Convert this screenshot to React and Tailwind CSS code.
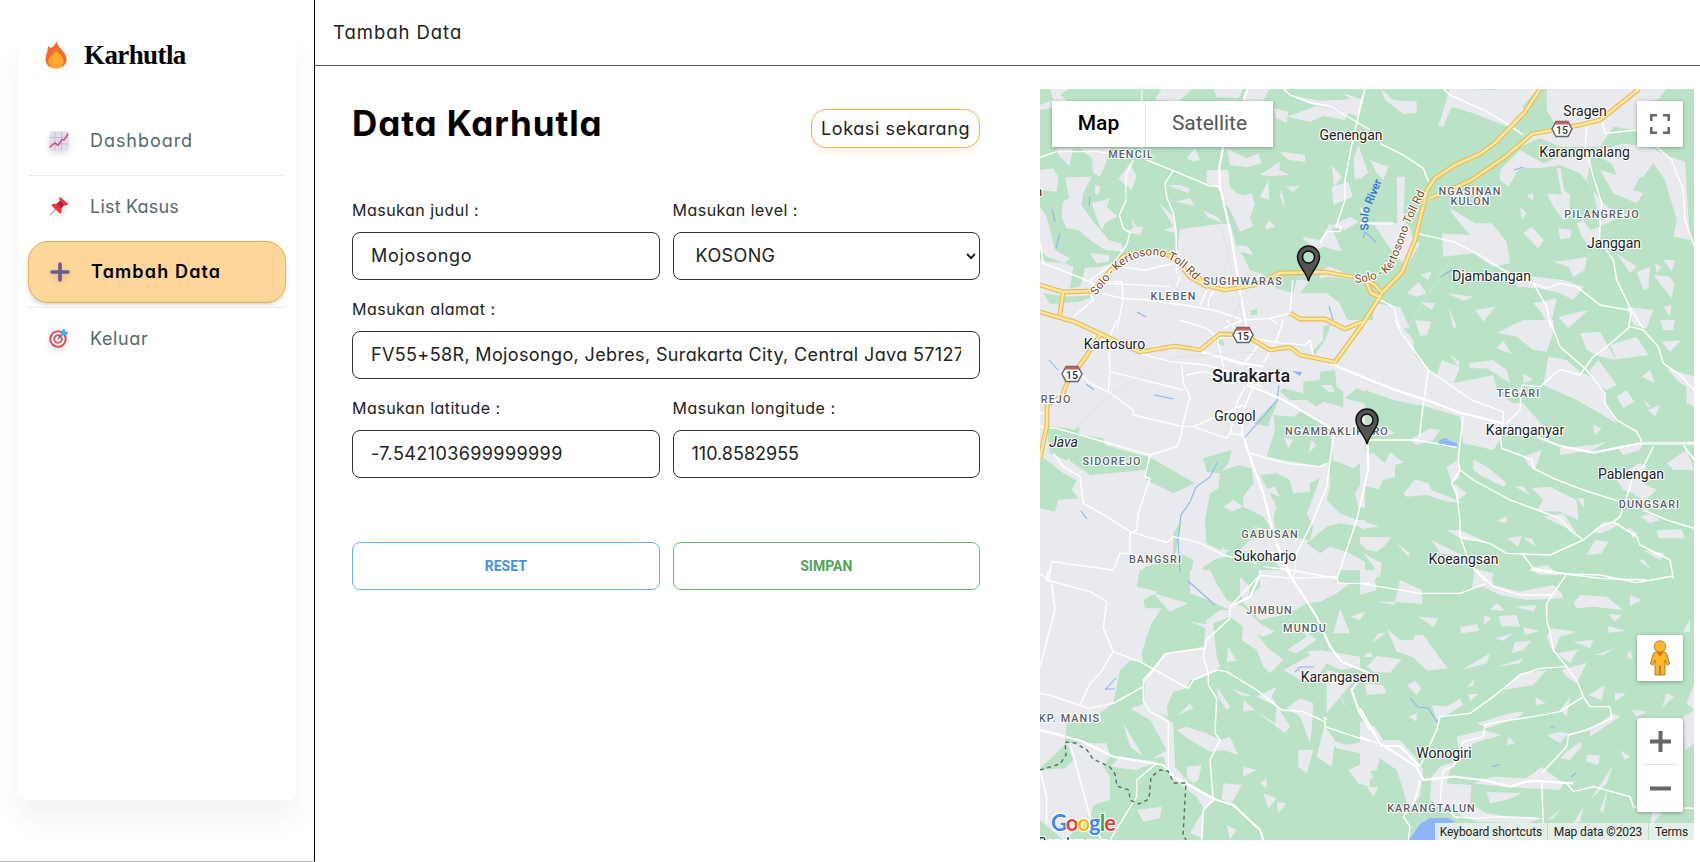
import React from "react";

const LAND = "#e8eaed";
const GREEN = "#bae2c7";

/* Each tile is drawn at three units per pixel, offset to its place on the map. */
const tiles = [
  {
    at: "translate(1030 80) scale(.33333)",
    land: "M30 25H1020V760H30Z",
    green: [
      "M30 25H1025V650L975 590 900 560 870 570 870 600 800 600 790 640 740 625 700 585 660 570 640 530 620 500 600 430 540 435 450 448 440 520 400 510 300 520 262 545 210 560 165 565 150 620 120 625 130 560 100 548 50 545 30 538Z",
      "M810 640L840 600 900 590 1025 605V745L985 742 950 715 930 670 890 640Z",
      "M660 693L680 686 682 704 663 706Z",
      "M40 640L110 650 200 645 150 665 60 672Z",
    ],
    patches: [
      "M60 25L120 25 90 45 140 85 200 78 200 95 130 110 90 80 30 90 30 75 70 60Z",
      "M395 25L490 25 445 65 375 60Z", "M550 25L640 25 625 55 560 50Z", "M660 25L720 25 700 62 640 62Z",
      "M730 85L775 95 770 130 740 115Z", "M800 100L860 78 955 98 945 120 880 108 840 125 770 110Z",
      "M780 45L870 62 960 58 940 40 1000 60 985 110 925 90 850 75Z",
      "M80 205L130 205 118 258 85 225Z", "M150 205L240 205 228 250 210 290 190 280 185 235Z",
      "M30 270L70 265 85 290 80 335 30 330Z", "M105 292L185 290 160 340 155 375 190 425 220 460 235 480 275 490 280 515 225 510 180 480 145 450 110 445 95 415 98 365 118 355Z",
      "M195 315L212 320 205 345 195 340Z", "M185 370L240 355 230 380 262 408 225 430 215 450 200 415Z", "M300 250L320 290 305 330 265 298Z",
      "M305 415L320 440 340 440 330 465 285 455 310 445Z", "M385 365L430 410 440 460 400 450 430 440Z",
      "M410 315L450 315 480 325 475 340Z", "M435 365L480 355 495 378Z", "M470 235L495 205 510 240 490 245Z",
      "M530 270L595 270 600 320 620 340 640 345 665 340 675 372 660 415 670 438 630 455 605 400 560 320 530 310Z",
      "M520 390L560 410 580 430 530 410Z", "M690 350L715 300 718 360Z", "M755 325L765 385 750 350Z", "M765 320L808 318 790 336Z",
      "M590 205L650 235 685 220 695 250 650 262 600 255Z", "M690 285L750 245 748 270 778 285 720 288Z", "M750 215L825 225 825 245 775 240Z",
      "M905 320L955 305 968 350 910 375Z", "M905 255L935 290 912 320Z", "M970 240L985 195 1015 280 975 300Z",
      "M705 440L718 422 736 440 710 448Z", "M620 495L655 500 670 525 630 515Z", "M900 440L960 410 985 425 945 450Z",
      "M815 470L870 480 900 430 935 515 880 500 860 510 835 490Z", "M30 380L50 410 75 510 120 535 105 550 50 530 30 510Z",
      "M180 520L240 525 235 545 200 550Z", "M990 380L1015 400 1000 430Z",
    ],
    roads: [
      "M335 25V205M30 232L80 215 205 215 260 225M310 240L288 285 287 365 268 405 280 445 300 458 290 495 250 550 180 600M350 240L430 272 540 318 570 320M430 272L405 310 410 350 430 400 438 450 440 580M760 25L780 45 840 68 900 78 970 120 1020 150M1005 25L970 170 945 300 945 360 918 440 935 440 930 455 890 455 870 490M30 485L40 550 120 580 190 610M190 610L190 635 280 655 350 660 480 678 550 690 640 720 720 715 780 700 788 600M275 605L280 655 262 745M180 640L190 660 130 710M235 610L420 620M270 560L345 570 430 550M450 585L440 620M530 630L510 678M550 635L535 660 535 680M250 605H275M640 720L580 745M720 715L740 730",
    ],
    wide: ["M655 25L640 60M580 200L568 260 570 320 600 450 625 600 650 745"],
  },
  {
    at: "translate(1360 80) scale(.33333)",
    land: "M0 0H0Z",
    green: ["M15 25H1003V760H15Z"],
    patches: [
      "M62 25L100 60 170 65 170 98 130 102 75 60Z", "M270 25L400 30 500 90 455 145 340 100 275 80 250 140 235 138Z",
      "M400 28L535 25 460 110 400 80Z", "M560 25L920 25 900 55 850 70 832 100 830 150 760 140 720 200 600 200 540 175 480 200 520 155 590 140 560 90Z",
      "M600 110L690 100 680 160 600 165Z", "M420 270L480 210 550 250 600 230 660 235 700 210 680 300 720 360 780 410 720 440 700 330 660 280 600 255 540 265 480 262 445 320 420 300Z",
      "M560 340L605 345 590 265 602 265 612 330 630 345 628 395 610 420 580 380Z",
      "M695 220L790 190 880 205 915 225 975 245 990 480 940 470 950 420 915 300 880 250 850 290 780 310 755 250Z",
      "M720 270L820 300 840 290 820 330 850 340 830 370 760 340Z", "M30 240L85 260 70 300 50 280Z", "M0 255L20 280 0 300Z",
      "M110 290L135 290 130 420 150 440 160 480 180 490 140 560 100 520 40 430 112 430Z",
      "M270 385L345 430 395 430 440 485 450 550 400 560 340 520 250 530 245 460 330 465 275 400Z",
      "M490 460L515 440 552 480 535 505Z", "M595 445L635 450 630 475 600 478Z", "M650 430L670 420 690 450 720 440 720 500 680 490 665 470Z",
      "M500 345L520 340 520 365Z", "M480 380L500 400 485 420Z", "M580 545L625 540 680 530 675 570 640 590 625 560Z",
      "M830 575L870 560 865 625 850 630Z", "M885 550L905 560 890 580Z", "M910 540L945 540 935 575Z", "M880 585L930 590 942 610 935 655Z",
      "M770 520L830 560 810 580Z", "M450 575L520 590 610 600 670 620 640 660 600 640 540 625 470 620Z",
      "M520 670L590 655 580 700 570 745 545 700Z", "M595 710L685 690 625 745Z", "M800 680L880 690 860 745 820 735Z",
      "M345 690L405 680 370 725Z", "M260 640L340 650 310 662Z", "M265 680L280 745 290 740Z", "M40 670L120 680 150 745 40 745Z",
      "M180 665L225 670 215 690Z", "M910 680L935 675 930 710Z", "M140 640L175 605 200 640 170 650Z", "M180 585L215 575 205 600Z",
    ],
    roads: [
      "M250 25L270 45 380 95 440 130 490 165M60 190L130 225 190 265 205 305M170 460L280 485 350 520 430 570 520 610 560 625 600 610 650 620 720 675 815 692M680 140L675 200 700 290 725 370 718 480 760 540 770 600 815 692 805 745M520 610L560 680 572 745M725 120L735 160 830 150M890 200L935 240 970 330 975 420 1003 500M15 25L0 80M60 660L100 680 120 745M815 692L850 745",
    ],
    wide: ["M0 430H100"],
  },
  {
    at: "translate(1030 320) scale(.33333)",
    land: "M30 0H1030V785H30Z",
    green: [
      "M50 318L120 325 155 345 220 355 225 375 330 405 360 412 495 490 430 520 350 480 345 450 180 465 130 430 60 400Z",
      "M30 405L75 440 100 460 140 480 125 510 145 535 85 540 75 575 30 565Z",
      "M130 330L150 320 145 345Z", "M520 415L605 390 595 430 570 460 530 455Z", "M555 55L580 60 582 78 565 72Z",
      "M760 205L820 220 820 185 870 180 870 155 915 150 920 200 940 215 940 262 880 245 860 260 830 240 780 240 750 215Z",
      "M730 285L790 290 820 270 850 290 900 330 905 370 910 420 870 440 820 430 760 420 710 410 735 330Z",
      "M670 310L750 230 720 300 715 320Z", "M945 235L980 205 1030 225V270L1000 250Z", "M880 60L880 20 905 10 885 60 850 110 845 95Z",
      "M570 455L625 435 665 445 670 490 640 530 640 560 700 590 720 620 720 650 660 660 630 690 570 690 530 670 525 600 540 520 565 505Z",
      "M690 465L740 460 780 480 790 520 840 515 840 490 870 475 850 530 830 580 850 620 840 660 740 650 730 590 740 560Z",
      "M900 420L935 430 970 445 990 430 1000 480 975 520 985 560 1030 570V600L980 600 930 580 890 540 900 500Z",
      "M890 620L930 610 990 620 1030 650V740L960 700 900 680 870 700 830 670Z",
      "M340 745L400 720 450 700 490 720 480 785 330 785Z", "M430 640L455 600 440 690 430 720Z",
      "M520 740L600 690 700 700 760 750 740 785 520 785Z", "M830 750L900 765 930 785 810 785Z",
    ],
    patches: ["M870 195L905 195 915 215 895 215Z", "M580 560L610 540 640 560 605 575Z", "M700 510L735 500 750 530Z", "M545 720L580 680 590 710Z", "M760 350L790 360 775 385Z", "M845 360L860 375 835 400Z", "M90 435L120 415 120 450Z", "M850 540L885 530 890 580 850 570Z", "M670 620L725 630 700 650Z"],
    roads: [
      "M260 0L235 60 240 150 235 215M260 55L330 100 420 125 525 135 640 165M240 155L460 210M455 135L460 190 480 230 460 310 450 360 440 380 360 405 345 470 360 475 325 580 320 630 300 640M235 215L310 270 310 285 460 320 490 320 590 355 600 340 640 345M30 320L80 325 360 405M155 165L180 190 235 215M30 280H45M70 400L100 440 150 470 160 550 230 590 300 635 410 668 430 650 500 665 580 705 680 730M300 640L300 700 270 700 250 750 65 725 55 785M490 320L560 290 640 255M660 400L770 430 870 440 890 430M600 345L620 250 645 200M635 350L640 270 670 200M910 350L890 500 850 600 800 700 790 785M1010 370L1015 450 980 600 920 780M500 90L580 50 700 60 760 70 825 75M450 0L530 25 560 50 580 140M700 55L640 135 500 90M760 0L740 60 700 130M590 0L620 30 600 50M825 75L840 60 850 110M470 165L520 155 700 200M700 740L780 750 920 775M30 760L60 785",
    ],
    wide: ["M500 92L640 130 700 140M650 195L690 210 760 240 870 305 910 330M640 350L670 440 700 520 735 660 790 785M900 130L1020 180"],
  },
  {
    at: "translate(1360 320) scale(.33333)",
    land: "M0 0H0Z",
    green: ["M15 0H1003V785H15Z"],
    patches: [
      "M0 0H110L160 60 165 105 205 150 230 165 245 120 300 140 280 190 400 165 415 220 460 250 490 250 560 330 580 345 500 350 430 345 400 390 310 370 300 290 200 260 100 240 0 205Z",
      "M410 38L490 0H580L580 40 560 95 520 90 470 50Z", "M550 195L565 110 620 120 660 155 690 170 735 220 740 260 770 310 650 240 560 200Z",
      "M660 40L720 35 745 80 770 120 720 110 680 90Z", "M750 75L830 50 865 105 770 118Z", "M690 150L715 120 770 195 740 210 700 190Z",
      "M410 85L430 62 455 102Z", "M328 130L400 120 440 150 450 190 380 145 330 145Z", "M270 105L300 125 295 140Z", "M165 0L215 5 200 45 180 48Z",
      "M770 230L800 210 823 245 790 265Z", "M845 170L870 150 885 190Z", "M862 270L900 255 885 290Z", "M850 238L875 262 860 260Z", "M905 65L965 60 930 95Z", "M920 145L1003 170V210L960 190Z", "M980 190L1003 200V260L980 250Z",
      "M698 315L725 325 705 345Z", "M600 385L700 375 740 365 700 390 600 405Z", "M770 380L850 370 840 390 790 405Z", "M920 430L980 390 1003 450 940 450Z",
      "M20 400H40L75 430 90 395 130 428 105 435 105 470 70 480 55 508 0 495V400Z", "M35 345L80 325 105 340 70 350Z", "M150 360L210 325 240 330 220 360 170 375Z",
      "M130 522L165 478 205 490 215 510 310 548 260 545 200 525 140 530Z", "M260 440L295 420 300 470 275 490Z", "M280 490L320 520 290 545Z",
      "M340 418L380 440 400 455 440 490 430 500 360 465 340 450Z", "M465 500L490 498 510 525Z", "M515 505L570 500 650 540 655 600 600 575 530 572 550 540Z",
      "M490 410L545 390 525 450 505 435Z", "M650 535L672 535 672 562Z", "M765 470L840 430 860 440 850 490 890 510 850 545 820 520 790 510Z",
      "M700 635L730 605 780 610 750 630 720 640Z", "M680 705L705 660 745 665 725 700Z", "M890 630L965 628 975 655 895 655Z", "M840 590L870 580 900 600 870 610Z",
      "M800 620L835 640 820 655Z", "M850 690L915 700 900 720Z", "M835 720L850 718 875 750Z", "M410 602L440 588 440 610Z", "M440 655L485 648 475 680Z", "M490 655L515 655 528 680Z",
      "M260 630L300 630 345 650 380 665 310 660Z", "M215 660L285 695 320 710 240 700Z", "M110 670L150 700 145 712Z", "M0 650L95 652 70 680 50 695 20 690 0 670Z",
      "M0 600L60 620 0 625Z", "M10 700L65 730 60 770 20 775 45 745Z", "M340 745L400 760 390 785 345 785Z", "M490 160L520 180 490 190Z",
      "M550 590L610 580 650 640 600 615Z", "M510 745L560 735 600 765 540 765Z", "M900 0L945 0 940 30 910 30Z",
    ],
    roads: [
      "M105 0L125 40 205 150 190 250 178 350M205 150L270 195 335 240 430 275 430 305 420 340 425 385 480 405 515 420 520 445 580 475 670 510 780 545M310 290L300 370 295 420 300 450 275 490 290 520 300 600 300 650 330 730 375 785M25 360L170 360 290 382M25 375L25 440 5 540M300 450L340 480 450 540 600 595 630 630 670 660 720 620 760 605 780 590 810 500 820 460 850 440 880 380M440 310L480 270 485 195 540 200 600 148 660 165 700 110 740 80 810 20 850 30 895 80 910 130 960 165 1003 210M570 0L600 80 680 150 735 220 735 250 770 300 830 335 845 365M300 650L390 670 440 700 570 705 670 660M490 705L520 745 640 765 720 775 860 780M760 605L830 650 840 675 930 720 940 775M850 570L920 600 1003 625M970 375L1003 420",
    ],
    wide: ["M0 168L120 215 200 240 300 278 430 310M530 350L600 378 700 398 840 370 1003 370"],
  },
  {
    at: "translate(1030 570) scale(.33333)",
    land: "M30 0H1030V60H30Z",
    green: ["M15 60H1030V810H30V0H1030V60Z"],
    patches: [
      "M30 0H330L320 50 385 65 340 90 345 115 395 115 365 160 350 200 335 250 340 275 300 272 270 300 250 400 210 430 215 455 110 458 105 520 230 520 240 560 220 590 240 620 240 690 190 705 180 750 100 810 30 750V600L105 595 130 570 110 520 30 595Z",
      "M480 0L540 0 560 40 590 90 640 110 690 160 680 190 710 230 760 270 720 310 700 290 680 240 635 210 640 170 600 140 550 160 560 260 570 290 545 310 480 330 470 355 430 365 410 410 415 440 340 410 345 340 400 250 520 230 530 150 570 120 600 120 510 80 480 70Z",
      "M370 70L475 100 420 125Z", "M480 155L545 165 540 180Z", "M690 0H930L915 35 960 40 920 70 870 95 830 100 780 130 690 150 640 100 690 50Z",
      "M630 20L660 50 650 110 630 70Z", "M670 150L735 185 700 200 675 190Z", "M910 190L930 115 960 190Z", "M770 240L830 200 820 180 860 210 800 250Z",
      "M830 245L860 240 890 270 880 285Z", "M960 140L1005 125 990 150Z", "M870 240L990 260 990 290 930 300 890 280 870 310 810 330 760 300Z",
      "M595 230L620 272 590 275Z", "M890 300L980 320 890 430 885 470 915 510 905 590 860 560 890 440Z", "M770 415L810 385 850 400 845 480 840 520 810 440Z",
      "M805 540L850 540 830 610 805 590Z", "M560 350L600 410 590 420 565 380Z", "M605 355L670 380 630 375Z", "M640 390L675 420 640 425Z",
      "M665 415L735 460 740 410 680 380 740 350 725 380 780 470 765 490Z", "M445 435L480 400 490 415Z", "M440 480L470 470 530 490 570 510 600 500 625 555 580 540 540 545 480 510Z",
      "M280 460L340 560 300 530Z", "M300 415L350 400 430 460 435 590 480 640 560 690 520 715 500 680 420 620 400 560 370 565 410 540 360 450Z",
      "M470 590L515 585 505 630 490 640 470 620Z", "M320 720L395 710 390 745 340 755Z", "M580 640L635 645 605 700 575 690Z", "M640 590L680 600 640 620Z",
      "M700 670L740 685 715 715Z", "M740 695L770 700 745 730Z", "M690 640L710 625 710 655Z", "M900 510L950 525 1020 510V560L990 550 920 535Z", "M955 600L1020 570V650L985 640Z", "M910 340L950 410 940 400Z", "M270 560L380 575 320 600 240 590Z", "M480 790L520 720 520 805Z", "M590 765L620 780 600 808Z",
    ],
    roads: [
      "M55 0L50 30 180 65 230 95 220 175 250 245 330 275 475 355 490 330 560 300 590 305 680 360 755 420 820 425 885 455 885 470 1020 515M65 40L75 120 30 290M250 245L210 310 180 340 150 405M30 370L60 375 175 415 250 400 340 350 340 330 410 250 525 235M600 110L600 145 530 210 520 260 535 310 535 345 560 385 555 490 570 510 540 570 550 690M340 340L340 395 360 425 415 455 415 600M690 0L690 15 600 110M690 15L780 25 920 20 925 40 1020 40M370 300L340 340M120 520L145 610 180 740 215 810M380 580L320 630 320 680 240 810M30 600L50 680 50 760M550 690L520 720 515 810M890 450L880 440",
    ],
    wide: ["M770 0L860 140 900 230 935 275 1020 310M1000 310L965 360 985 420 1020 480M30 480L90 495 160 515 250 560 400 585 430 620 560 690 610 705 690 780 700 810M690 15L660 80 600 110"],
  },
  {
    at: "translate(1360 570) scale(.33333)",
    land: "M0 0H0Z",
    green: ["M15 0H1003V810H15Z"],
    patches: [
      "M0 0H65L45 30 50 60 0 75Z", "M105 95L120 30 185 60 188 102Z", "M55 95L110 95 100 105Z", "M345 0L395 10 400 45 480 65 580 45 605 70 610 85 500 90 420 75 370 50 335 55Z",
      "M640 100L660 75 740 80 790 120 700 110 650 115Z", "M810 75L845 90 810 108Z", "M745 132L785 135 765 155Z", "M745 168L800 182 745 188Z", "M415 138L470 135 480 170 425 168Z",
      "M372 135L395 145 372 165Z", "M300 172L350 162 358 182 305 190Z", "M175 140L235 145 220 170Z", "M390 120L410 98 435 122Z", "M465 110L530 105 520 125Z", "M490 172L540 182 495 195Z",
      "M80 175L120 210 160 210 165 195 190 195 262 295 200 302 160 262 110 245Z", "M20 290L50 258 125 268 90 308 40 305Z", "M10 260L30 245 40 262Z", "M55 190L78 188 35 220Z",
      "M305 300L390 250 380 280Z", "M410 290L490 265 480 280Z", "M405 205L460 190 430 212Z", "M455 250L465 215 515 212 490 240Z", "M320 355L345 325 340 345Z", "M325 372L355 372 330 395Z",
      "M575 175L650 185 600 200 580 250 560 200Z", "M640 215L700 210 690 235Z", "M590 250L655 238 630 280Z", "M430 360L480 310 560 300 520 345Z", "M605 300L680 278 650 340 620 320Z",
      "M685 375L735 345 725 390Z", "M765 370L798 370 765 395Z", "M800 260L810 240 820 270Z", "M705 255L765 235 730 255Z", "M905 415L920 370 942 380Z", "M815 420L865 425 830 440Z",
      "M215 405L260 410 300 385 310 405 270 430 250 440 230 450Z", "M290 500L370 480 425 495 340 520 310 560 270 600 260 640 335 645 330 700 380 730 450 740 545 745 500 760 350 755 240 710 210 690 215 620 240 590 300 570Z",
      "M340 640L400 620 500 625 545 590 610 640 600 660 430 650Z", "M350 460L450 430 495 425 470 445 380 475Z", "M445 500L465 520 440 525Z", "M525 380L558 400 530 405Z", "M560 495L600 485 625 490 600 520Z",
      "M600 565L620 545 660 515 665 530 630 570Z", "M680 555L720 555 715 585 680 575Z", "M780 540L810 560 795 570Z", "M690 480L760 430 780 440 690 500Z",
      "M0 455L45 470 70 510 120 510 165 560 190 600 180 680 145 720 130 660 110 600 60 565 50 600 20 605 0 620Z", "M140 345L165 332 185 355 170 375 155 360Z", "M145 440L170 430 170 455Z", "M15 340L70 345 80 370 20 375Z",
      "M20 650L55 652 40 680Z", "M25 620L35 605 40 630Z", "M380 665L485 670 440 690 390 700Z", "M640 760L670 710 660 755Z", "M690 690L760 585 740 640Z", "M880 710L905 730 870 770Z", "M970 185L990 145 990 185Z", "M980 400L1003 340V420Z", "M600 420L630 380 620 440Z", "M970 440L1003 420V520L975 540Z", "M720 720L745 650 730 730Z", "M560 750L600 720 580 745Z",
    ],
    roads: [
      "M0 40L180 70 300 70 380 40M350 0L400 50 480 75 580 75M510 0L620 12 720 15 830 38 940 18M620 12L560 100 560 150 570 185 580 240 620 290 650 330 670 380 690 410 750 410 755 445M620 290L540 295 480 315 400 380 330 430 240 440 230 480 180 590M670 380L600 425 520 440 420 455 375 465 370 500 310 515 280 590 250 600 245 640 240 700M755 445L680 480 625 495 620 530 545 610M545 635L550 760M180 630L165 690 130 740 150 770 145 810M280 740L350 745 420 740 540 745M240 700L290 745M620 640L640 665 700 650 810 680 820 710 1003 715M0 500L55 520",
    ],
    wide: ["M0 415L60 520 170 590 190 630 280 620 370 630 450 650 510 632 640 640M60 528H120L180 590"],
  },
];

const tollEdge = "M1040 285L1063 292 1093 291M1063 292L1060 315M1195 273L1205 285 1225 290 1255 285 1280 273 1325 272 1365 279M1365 279L1375 285 1382 293M1540 89L1525 112 1495 143 1480 154 1455 165 1435 178 1427 190 1415 240 1402 272 1382 293 1362 325 1335 362M1639 89L1600 120 1580 125 1532 134 1505 157 1470 181 1430 198M1040 312L1075 322 1105 336 1140 352 1175 346 1200 350 1220 334 1245 335 1270 350 1290 347 1300 355 1335 362M1100 335L1085 358 1067 383 1062 396 1047 405 1047 425 1040 458M1290 313L1300 319 1325 319 1345 329 1362 322M1365 279L1371 293 1380 297";

const labels = [
  [1351, 140, "Genengan"], [1585, 116, "Sragen"], [1584.5, 157, "Karangmalang"], [1614, 248, "Janggan"], [1491.5, 281, "Djambangan"],
  [1114.5, 349, "Kartosuro"], [1235, 421, "Grogol"], [1525, 435, "Karanganyar"], [1631, 479, "Pablengan"], [1463.5, 564, "Koeangsan"],
  [1265, 561, "Sukoharjo"], [1340, 682, "Karangasem"], [1444, 758, "Wonogiri"],
];
const areas = [
  [1131, 158, "MENCIL"], [1470, 195, "NGASINAN"], [1470.5, 205, "KULON"], [1602, 217.5, "PILANGREJO"], [1243, 285, "SUGIHWARAS"], [1173.5, 300, "KLEBEN"],
  [1518.5, 397, "TEGARI"], [1337, 435, "NGAMBAKLIPURO"], [1112, 465, "SIDOREJO"], [1270, 538, "GABUSAN"], [1155.5, 563, "BANGSRI"], [1649.5, 507.5, "DUNGSARI"],
  [1269.5, 614, "JIMBUN"], [1305, 632, "MUNDU"], [1069.5, 722, "KP. MANIS"], [1431.5, 812, "KARANGTALUN"], [1052, 403, "AREJO"],
];

function Shield({ x, y }) {
  return (
    <g transform={`translate(${x} ${y})`}>
      <path d="M-6-7.5H6L10 0 6 7.5H-6L-10 0Z" fill="#fff" stroke="#5f6368" strokeWidth="1.4" />
      <path d="M-6-7.5H6L7.6-4.5H-7.6Z" fill="#c5605f" />
      <text y="4.5" textAnchor="middle" fontSize="10.5" fontWeight="500" fill="#333">15</text>
    </g>
  );
}

function Marker({ x, y }) {
  return (
    <g transform={`translate(${x} ${y})`}>
      <path fillRule="evenodd" d="M0 0C-2-9-11-15-11-24A11 11 0 0 1 11-24C11-15 2-9 0 0ZM6-24A6 6 0 1 0-6-24A6 6 0 1 0 6-24Z" fill="#555" stroke="#111" strokeWidth="1.5" />
    </g>
  );
}

function MapCanvas() {
  return (
    <svg className="block h-full w-full font-[Roboto,sans-serif]" viewBox="1040 89 654 751" preserveAspectRatio="none">
      {tiles.map((t, i) => (
        <g key={i} transform={t.at}>
          <path d={t.land} fill={LAND} />
          {t.green.map((d, j) => <path key={j} d={d} fill={GREEN} />)}
        </g>
      ))}
      {tiles.map((t, i) => (
        <g key={i} transform={t.at}>
          {t.patches.map((d, j) => <path key={j} d={d} fill={LAND} />)}
        </g>
      ))}
      <g fill="none" stroke="#8fb4f5" strokeWidth="1.1">
        <path d="M1217 463L1210 477 1196 487 1190 502 1181 515 1178 540 1180 572M1188 581L1215 605M1244 438L1265 415 1277 400 1279 385M1049 360L1058 370M1086 384L1094 390M1081 511L1087 519M1115 689L1105 689M1116 678L1105 690M1329 306L1333 320M1090 196L1089 206M1052 209L1055 222M1060 233L1056 248M1137 312L1146 317M1154 395L1174 399M1410 698L1418 707 1428 708 1438 723M1452 270L1440 277M1514 170L1523 167M1363 238L1365 232 1376 242M1295 672L1300 667 1314 667M1550 727H1555M1492 767L1500 764M1571 777L1576 773" />
      </g>
      <path d="M1437 445L1440 440 1446 438 1450 441 1457 443V447ZM1292 371L1302 372 1300 376ZM1409 840L1420 824 1430 818 1448 818 1455 822 1440 825 1438 840Z" fill="#8fb4f8" />
      {tiles.map((t, i) => (
        <g key={i} transform={t.at} fill="none" stroke="#fff" strokeLinejoin="round">
          <path d={t.roads[0]} strokeWidth="4.2" />
          {t.wide.map((d, j) => <path key={j} d={d} strokeWidth="6.6" />)}
        </g>
      ))}
      <path d="M1229 330L1250 272M1220 220L1245 330M1040 460L1110 395 1175 357 1290 350M1450 260L1400 340" fill="none" stroke="#dde0e4" strokeWidth=".8" />
      <g fill="none" strokeLinejoin="round">
        <path d="M1093 291Q1112 268 1123 257Q1152 245 1176 259L1190 277 1208 287" stroke="#e8bb54" strokeWidth="5" />
        <path d={tollEdge} stroke="#e8bb54" strokeWidth="4.8" />
        <path d="M1093 291Q1112 268 1123 257Q1152 245 1176 259L1190 277 1208 287" stroke="#fde69a" strokeWidth="2.6" />
        <path d={tollEdge} stroke="#fde69a" strokeWidth="2.6" />
      </g>
      <path d="M1040 770L1060 764 1066 755 1065 742 1075 743 1087 750 1093 759 1110 767 1115 774 1117 786 1129 790 1130 800 1139 804 1149 799 1151 777 1160 770 1168 771 1174 783 1186 783 1183 835 1186 840" fill="none" stroke="#5c6b63" strokeWidth="1.4" strokeDasharray="4 3.5" />

      <defs>
        <path id="toll-west" d="M1096 296Q1114 271 1128 262Q1150 251 1166 258Q1181 264 1200 286" />
        <path id="toll-east" d="M1355 283Q1382 281 1393 267Q1402 248 1409 226L1431 180" />
        <path id="river" d="M1369 230Q1366 214 1373 202L1385 174" />
      </defs>
      <g className="[paint-order:stroke]" stroke="#fff" strokeWidth="2.2" strokeLinejoin="round">
        <g fontSize="11.6" fill="#7b4a1e">
          <text><textPath href="#toll-west">Solo - Kertosono Toll Rd</textPath></text>
          <text><textPath href="#toll-east">Solo - Kertosono Toll Rd</textPath></text>
        </g>
        <text fontSize="11.4" fontWeight="500" fill="#2f6fd6" strokeWidth="0.6" stroke={GREEN}><textPath href="#river">Solo River</textPath></text>
        <g fontSize="14" fill="#202124" textAnchor="middle">
          {labels.map(([x, y, s]) => <text key={s} x={x} y={y}>{s}</text>)}
          <text x="1251" y="382" fontSize="18" fontWeight="500">Surakarta</text>
          <text x="1063.5" y="447" fontStyle="italic">Java</text>
          <text x="1073" y="848">Bendungan</text>
        </g>
        <g fontSize="10.8" fontWeight="500" letterSpacing="1.1" fill="#5a6068" textAnchor="middle">
          {areas.map(([x, y, s]) => <text key={s} x={x} y={y}>{s}</text>)}
        </g>
        <text x="1035" y="196" fontSize="13" fill="#202124">n</text>
      </g>
      <Shield x={1562} y={129} />
      <Shield x={1243} y={335} />
      <Shield x={1072} y={374} />
      <Marker x={1308.5} y={281} />
      <Marker x={1367} y={444} />
      <text x="1051" y="831" fontFamily="Lato" fontWeight="700" fontSize="22" textLength="65" stroke="#fff" strokeWidth="2.2" className="[paint-order:stroke]">
        <tspan fill="#4285f4">G</tspan><tspan fill="#ea4335">o</tspan><tspan fill="#fbbc05">o</tspan><tspan fill="#4285f4">g</tspan><tspan fill="#34a853">l</tspan><tspan fill="#ea4335">e</tspan>
      </text>
    </svg>
  );
}

function Flame() {
  return (
    <svg className="h-7 w-[22px]" viewBox="0 0 22 28">
      <path d="M11.500 .3C12 4 15.500 6.500 18 10.500 20.500 13 21.500 15.500 21.500 18.500c0 5.500-4.500 9-10.500 9S.5 24 .5 18C.5 14 2 12 2.800 8.500c0-1.500.2-2.500.7-3.200C4.300 6 5 6.500 5.500 7.200 8.500 5.500 10.500 3.500 11.500 .3Z" fill="#f96a2a" />
      <path d="M11.500 9C12.500 12 18 14.500 18.500 19.500c.4 5-3 7.800-7.500 7.800s-7.500-3-7.500-7.300c0-5 5.500-6.500 8-11Z" fill="#ffaa2c" />
    </svg>
  );
}

function ChartIcon() {
  return (
    <svg className="size-5 drop-shadow-md" viewBox="0 0 20 20">
      <rect x=".5" y=".5" width="19" height="19" rx="2.500" fill="#e3dced" />
      <path d="M6 .5v19M12.500 .5v19M.5 6.500h19M.5 13h19" stroke="#c6bbd8" strokeWidth="1" />
      <path d="M1 16l5-4 3 2.500 4-6 2 .5 4-6" fill="none" stroke="#d84b7c" strokeWidth="1.500" strokeLinecap="round" />
    </svg>
  );
}

function PinIcon() {
  return (
    <svg className="size-5 drop-shadow-md" viewBox="0 0 20 20">
      <path d="M8 12L1 19" stroke="#b9b9c1" strokeWidth="1.500" />
      <path d="M11 1l8 6.500-1.500 2-3-.3-1.800 2.800L12.500 17l-1.500.5L2.500 9.500 3.500 8l5-.3L11 5 10 2.500Z" fill="#ef3340" />
      <path d="M11 5l4 4-2.300 3-5-4.300Z" fill="#bd1746" />
    </svg>
  );
}

function PlusIcon() {
  return (
    <svg className="size-5 drop-shadow-md" viewBox="0 0 20 20">
      <path d="M10 2v16M2 10h16" stroke="#665b91" strokeWidth="3.600" strokeLinecap="round" />
    </svg>
  );
}

function TargetIcon() {
  return (
    <svg className="size-5 drop-shadow-md" viewBox="0 0 20 20">
      <circle cx="9" cy="11" r="7.700" fill="#fff" stroke="#e04a50" strokeWidth="2" />
      <circle cx="9" cy="11" r="3.800" fill="#fff" stroke="#e04a50" strokeWidth="1.900" />
      <path d="M9 11l5-6" stroke="#6c5f86" strokeWidth="1.300" />
      <path d="M11.500 7.500L12 3l3.500-2.500.5 3 3.500.5L17 7.500Z" fill="#43aeea" />
    </svg>
  );
}

function NavItem({ icon, text, className = "" }) {
  return (
    <a className={`flex items-center pl-[21px] text-[18px] text-[#56696d] ${className}`}>
      {icon}
      <span className="ml-[21px] whitespace-nowrap">{text}</span>
    </a>
  );
}

function Sidebar() {
  return (
    <aside className="h-full w-[315px] shrink-0 border-r border-r-black border-b border-b-[#bbb] pt-8 pl-[18px]">
      <div className="h-[768px] w-[278px] rounded-xl bg-white px-[10px] shadow-[0_20px_27px_rgba(38,70,65,0.06)]">
        <div className="flex h-[62px] items-center pb-4 pl-[17px]">
          <Flame />
          <span className="ml-[17px] font-['Liberation_Serif',serif] text-[27px] font-bold tracking-[-0.6px] text-black">Karhutla</span>
        </div>
        <nav className="flex flex-col pt-[13px]">
          <NavItem icon={<ChartIcon />} text="Dashboard" className="h-[68px] pb-px tracking-[0.95px]" />
          <hr className="border-[#ececec]" />
          <NavItem icon={<PinIcon />} text="List Kasus" className="h-[62px] pb-[2px] tracking-[0.2px]" />
          <a className="mt-[3px] flex h-[62px] items-center rounded-[20px] border border-[#e7b04d] bg-[#fed79a] pb-px pl-[21px] text-[18px] font-semibold text-black shadow-[0_2px_4px_rgba(0,0,0,0.16)]">
            <PlusIcon />
            <span className="ml-[21px] tracking-[1.15px] whitespace-nowrap">Tambah Data</span>
          </a>
          <hr className="mt-[4px] border-[#ececec]" />
          <NavItem icon={<TargetIcon />} text="Keluar" className="h-[60px] tracking-[0.6px]" />
        </nav>
      </div>
    </aside>
  );
}

const field = "block h-12 w-full rounded-lg border border-[#333] bg-white px-[18px] pb-px text-[18px] text-[#222] outline-none";

function Field({ label, children, className = "" }) {
  return (
    <label className={`block ${className}`}>
      <span className="mb-[10px] block h-6 text-[16px] leading-6 tracking-[0.48px] text-[#222]">{label}</span>
      {children}
    </label>
  );
}

export default function App() {
  return (
    <div className="flex h-[862px] w-full overflow-hidden bg-white font-[Inter,sans-serif] [font-feature-settings:'cv11']">
      <Sidebar />
      <main className="flex min-w-0 flex-1 flex-col">
        <header className="flex h-[66px] shrink-0 items-center border-b border-[#555] pl-[18px] text-[18.5px] tracking-[0.95px] text-[#222]">Tambah Data</header>
        <div className="flex flex-1 pl-[37px]">
          <form className="w-[628px] pt-[33px]">
            <div className="flex items-start justify-between">
              <h1 className="text-[35px] leading-[48px] font-bold tracking-[0.9px] text-black">Data Karhutla</h1>
              <button type="button" className="mt-[10px] h-[39px] w-[169px] rounded-[15px] border border-[#e9b25b] text-[18px] tracking-[0.6px] whitespace-nowrap text-[#222] shadow-[0_4px_6px_rgba(255,160,60,0.16)]">Lokasi sekarang</button>
            </div>
            <div className="mt-[50px] grid grid-cols-2 gap-x-[13px] gap-y-[17px]">
              <Field label="Masukan judul :"><input className={`${field} tracking-[0.7px]`} defaultValue="Mojosongo" /></Field>
              <Field label="Masukan level :">
                <select className={`${field} tracking-[0.4px]`} defaultValue="KOSONG"><option>KOSONG</option></select>
              </Field>
              <Field label="Masukan alamat :" className="col-span-2">
                <input className={`${field} tracking-[0.36px]`} defaultValue="FV55+58R, Mojosongo, Jebres, Surakarta City, Central Java 57127, Indonesia" />
              </Field>
              <Field label="Masukan latitude :"><input className={`${field} tracking-[0.4px]`} defaultValue="-7.542103699999999" /></Field>
              <Field label="Masukan longitude :"><input className={field} defaultValue="110.8582955" /></Field>
            </div>
            <div className="mt-[64px] grid grid-cols-2 gap-x-[13px] font-[Roboto,sans-serif] text-[14px] font-bold">
              <button type="reset" className="h-12 rounded-lg border border-[#6bb1ea] text-[#4393e0]">RESET</button>
              <button type="button" className="h-12 rounded-lg border border-[#70b974] text-[#52a557]">SIMPAN</button>
            </div>
          </form>
          <section className="relative mt-[23px] ml-[60px] h-[751px] w-[654px] overflow-hidden font-[Roboto,sans-serif]">
            <MapCanvas />
            <div className="absolute top-[12px] left-[12px] flex h-[46px] bg-white text-[21px] shadow-[0_1px_4px_rgba(0,0,0,0.3)]">
              <span className="flex w-[94px] items-center justify-center border-r border-[#e6e6e6] font-medium text-black">Map</span>
              <span className="flex w-[127px] items-center justify-center text-[#565656]">Satellite</span>
            </div>
            <div className="absolute top-[12px] right-[11px] flex size-[46px] items-center justify-center rounded-xs bg-white shadow-[0_1px_4px_rgba(0,0,0,0.3)]">
              <svg className="size-5" viewBox="0 0 20 20"><path d="M1.250 7V1.250H7M13 1.250h5.750V7M18.750 13v5.750H13M7 18.750H1.250V13" fill="none" stroke="#666" strokeWidth="2.500" /></svg>
            </div>
            <div className="absolute top-[546px] right-[11px] flex size-[46px] items-center justify-center rounded-xs bg-white shadow-[0_1px_4px_rgba(0,0,0,0.3)]">
              <svg className="h-9 w-5" viewBox="0 0 20 36">
                <path d="M5 12h10l2 2 2.500 10-2.500 1-2-5V35H10.500V26h-1v9H5V20L3 25 .5 24 3 14Z" fill="#fbb72a" stroke="#a7691d" strokeWidth=".8" />
                <circle cx="10" cy="6.500" r="5.800" fill="#fbb72a" stroke="#a7691d" strokeWidth=".8" />
                <path d="M7 12.500h6L10 17Z" fill="#e9682b" />
              </svg>
            </div>
            <div className="absolute top-[629px] right-[11px] flex h-[94px] w-[46px] flex-col items-center rounded-xs bg-white shadow-[0_1px_4px_rgba(0,0,0,0.3)]">
              <span className="flex h-[47px] w-[34px] items-center justify-center border-b border-[#e0e0e0]">
                <svg className="size-[21px]" viewBox="0 0 21 21"><path d="M10.500 0v21M0 10.500h21" stroke="#666" strokeWidth="4" /></svg>
              </span>
              <span className="flex h-[47px] items-center">
                <svg className="size-[21px]" viewBox="0 0 21 21"><path d="M0 10.500h21" stroke="#666" strokeWidth="4" /></svg>
              </span>
            </div>
            <div className="absolute right-0 bottom-0 flex h-[17px] items-center text-[12px] tracking-[-0.1px] text-[#222] [&>span]:flex [&>span]:h-full [&>span]:items-center [&>span]:justify-center [&>span]:bg-[#f0f3f1]/80 [&>span]:whitespace-nowrap">
              <span className="mr-px w-[112px]">Keyboard shortcuts</span>
              <span className="mr-px w-[100px]">Map data ©2023</span>
              <span className="w-[45px]">Terms</span>
            </div>
          </section>
        </div>
      </main>
    </div>
  );
}
